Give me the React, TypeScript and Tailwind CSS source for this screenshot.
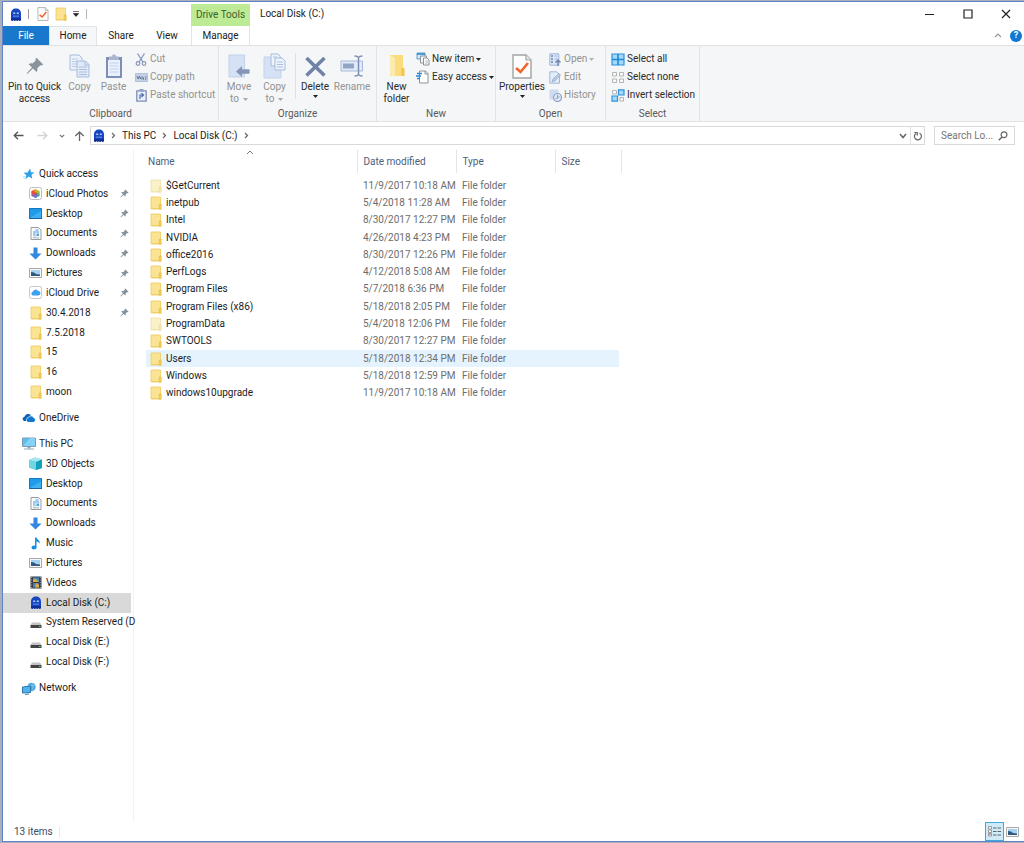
import React from "react";

type Kids = { children: React.ReactNode };

function Ic({ w, h, children }: Kids & { w: number; h: number }) {
  return (
    <svg width={w} height={h} viewBox={`0 0 ${w} ${h}`} fill="none" aria-hidden="true" className="shrink-0">
      {children}
    </svg>
  );
}

const Ghost = () => (
  <Ic w={12} h={13}>
    <path d="M1 12V5.5C1 2.5 3 .5 6 .5s5 2 5 5V12l-1.2 1-1.4-1-1.2 1L6 12l-1.2 1-1.4-1-1.2 1z" fill="#1747c0" />
    <path d="M1 12V10h10v2l-1.2 1-1.4-1-1.2 1L6 12l-1.2 1-1.4-1-1.2 1z" fill="#0d2f96" />
    <path d="M3.2 4.5h2v1.6h-2zM6.8 4.5h2v1.6h-2z" fill="#b9cdfb" />
    <path d="M3 8.5l1 -.7 1 .7 1-.7 1 .7 1-.7 1 .7" stroke="#7f9df0" strokeWidth=".8" />
  </Ic>
);
const Folder = ({ pale = false }: { pale?: boolean }) => (
  <Ic w={12} h={14}>
    <path d="M1 1h9.5v12H1z" fill={pale ? "#fbf1c8" : "#fae392"} stroke={pale ? "#efe0a8" : "#edca5c"} strokeWidth=".8" />
    <path d="M9.2 8h2v5.3h-2z" fill={pale ? "#f6e7ae" : "#f5cf56"} stroke={pale ? "#ead99a" : "#e3b93e"} strokeWidth=".6" />
    <path d="M1.5 12.5h8" stroke={pale ? "#f3e5b0" : "#f0ce61"} />
  </Ic>
);
const Caret = ({ color = "#222" }: { color?: string }) => (
  <Ic w={5} h={3}>
    <path d="M0 0h5L2.5 3z" fill={color} />
  </Ic>
);
const CheckPage = ({ w, h }: { w: number; h: number }) => (
  <svg width={w} height={h} viewBox="0 0 20 25" fill="none" aria-hidden="true">
    <path d="M1 1h13l5 5v18H1z" fill="#fdfdfd" stroke="#a3a3a3" strokeWidth="1.4" />
    <path d="M14 1v5h5" fill="#e8e8e8" stroke="#a3a3a3" strokeWidth="1.2" />
    <path d="M4 14l4.5 4L16 9" stroke="#f2642a" strokeWidth="2.6" />
  </svg>
);
const PinBig = () => (
  <Ic w={18} h={18}>
    <path d="M10.5.8l6.7 6.7-1.5 1.1-1.3-.4-3.1 3.1c.4 1.5.1 2.8-.8 3.8L7 11.6 1.2 17l-.6-.6L6 10.600 2.700 7.300c1-.9 2.400-1.200 3.800-.8l3.200-3.100-.3-1.300z" fill="#8a949c" />
  </Ic>
);
const PinSmall = () => (
  <Ic w={9} h={9}>
    <path d="M5.3.4l3.3 3.3-.8.6-.6-.2-1.5 1.5c.2.8 0 1.5-.4 2L3.5 5.9.8 8.4l-.4-.4 2.6-2.7L1.3 3.6c.5-.5 1.2-.6 1.9-.4L4.8 1.7 4.6 1z" fill="#86929b" />
  </Ic>
);
const pageStroke = "#a9bcda";
const CopyBig = () => (
  <Ic w={21} h={24}>
    <path d="M1 1h9l3 3v12H1z" fill="#eaf1fb" stroke={pageStroke} />
    <path d="M3 5h6M3 7.5h6M3 10h5M3 12.5h5" stroke="#bccbe4" />
    <path d="M8 7h8.500l3.500 3.500V23H8z" fill="#dfe9f8" stroke={pageStroke} />
    <path d="M16 7v4h4" stroke={pageStroke} />
    <path d="M10 13h8M10 15.500h8M10 18h8M10 20.500h8" stroke="#aebfdc" />
  </Ic>
);
const PasteBig = () => (
  <Ic w={18} h={25}>
    <path d="M1 3h16v21H1z" fill="#7d8fb5" />
    <path d="M3 6h12v16H3z" fill="#eaf1fc" />
    <path d="M4 2.500h3C7 1 8 .5 9 .5s2 .5 2 2h3V6H4z" fill="#a8b6d0" />
    <path d="M4.500 9h9M4.500 12h9M4.500 15h9M4.500 18h9" stroke="#cfdcf0" strokeWidth="1.500" />
  </Ic>
);
const Cut = () => (
  <Ic w={12} h={13}>
    <path d="M2.500.5L8 9M9.500.5L4 9" stroke="#8797bb" strokeWidth="1.300" />
    <circle cx="3" cy="10.500" r="1.800" stroke="#8797bb" strokeWidth="1.200" />
    <circle cx="9" cy="10.500" r="1.800" stroke="#8797bb" strokeWidth="1.200" />
  </Ic>
);
const CopyPath = () => (
  <Ic w={13} h={9}>
    <path d="M.5.5h12v8H.5z" fill="#c3d0e6" stroke="#b3c1da" />
    <path d="M2 3l1.200 3L4.500 3l1.200 3M7 3.500v3M8.500 6.500V4.500M10 4h1.500M10 6h1.500" stroke="#5e7299" />
  </Ic>
);
const PasteShortcut = () => (
  <Ic w={11} h={13}>
    <path d="M.8 1.800h9.400v10.400H.8z" fill="#e7effb" stroke="#7d8fb5" strokeWidth="1.300" />
    <path d="M3.500 0h4v2.500h-4z" fill="#8fa0c2" />
    <path d="M4 10V6h3M5.500 4.200L7.500 6 5.500 8" stroke="#4f6ea6" strokeWidth="1.200" />
  </Ic>
);
const MoveTo = () => (
  <Ic w={22} h={24}>
    <path d="M1 1h15.500v22H1z" fill="#d5e1f4" stroke="#c3d3eb" />
    <path d="M8 17.500l6-5.500v3.300h7.500v4.400H14V23z" fill="#8496b8" />
  </Ic>
);
const CopyTo = () => (
  <Ic w={23} h={26}>
    <path d="M1 4h17v21H1z" fill="#d5e1f4" stroke="#c3d3eb" />
    <path d="M8 1h7l2 2v10H8z" fill="#edf3fc" stroke={pageStroke} />
    <path d="M12 5h7l3 3v9H12z" fill="#edf3fc" stroke={pageStroke} />
    <path d="M14 9h6M14 11.500h6M14 14h6M10 4h4" stroke="#aebfdc" />
  </Ic>
);
const Delete = () => (
  <Ic w={21} h={21}>
    <path d="M1.500 2l18 17.500M19.500 2l-18 17.500" stroke="#7082a8" strokeWidth="3.600" />
  </Ic>
);
const Rename = () => (
  <Ic w={24} h={22}>
    <path d="M1 6h21.500v10H1z" fill="#e1eafa" stroke="#a7b9d8" />
    <path d="M3 8.500h11v5H3z" fill="#93a4c4" />
    <path d="M14.500 1c2 0 3.500.5 4 1.500.5-1 2-1.500 4-1.500M18.500 2v18M14.500 21c2 0 3.500-.5 4-1.500.5 1 2 1.500 4 1.500" stroke="#7d8fb3" strokeWidth="1.500" />
  </Ic>
);
const NewFolder = () => (
  <Ic w={16} h={24}>
    <path d="M1 1h13v21H1z" fill="#fbdc7c" />
    <path d="M1 1l5 3v19l-5-2z" fill="#fcebb0" />
    <path d="M12.500 14h3v8h-3z" fill="#f5c548" />
  </Ic>
);
const NewItem = () => (
  <Ic w={14} h={14}>
    <path d="M1 1h8v6H1z" fill="#d7eaf9" stroke="#62a0d0" />
    <path d="M1 2h8" stroke="#3187c9" strokeWidth="1.500" />
    <path d="M4.500 4h6v7h-6z" fill="#f4f6f8" stroke="#8a949c" />
    <path d="M7.500 6h3.500l2 2v5H7.500z" fill="#fff" stroke="#8a949c" />
    <path d="M9 9h3M9 11h3" stroke="#b5bcc2" />
  </Ic>
);
const EasyAccess = () => (
  <Ic w={14} h={14}>
    <path d="M3.500 1h6l2.500 2.500V13H3.500z" fill="#fff" stroke="#8a949c" />
    <path d="M9 1v3h3" stroke="#8a949c" />
    <path d="M1 3.500h5M0 6h5M1 8.500h3" stroke="#2f86d0" strokeWidth="1.300" />
  </Ic>
);
const OpenIc = () => (
  <Ic w={12} h={13}>
    <path d="M.8.8h9v11.400h-9z" fill="#dbe6f6" stroke="#a5b7d6" />
    <path d="M2 3h2M2 6h2M2 9h2" stroke="#6f86b2" strokeWidth="1.600" />
    <path d="M5.500 3h3M5.500 6h3" stroke="#a5b7d6" />
    <path d="M9 13V8M6.500 9.500L9 7l2.500 2.500" stroke="#7388b0" strokeWidth="1.500" />
  </Ic>
);
const EditIc = () => (
  <Ic w={12} h={13}>
    <path d="M.8.8h7l2.700 2.700v8.700H.8z" fill="#e3ecf9" stroke="#a5b7d6" />
    <path d="M3 11l1-3 6-5.500 1.500 1.700L6 9.800z" fill="#bccbe4" stroke="#91a5c8" strokeWidth=".7" />
  </Ic>
);
const HistoryIc = () => (
  <Ic w={13} h={13}>
    <path d="M.5.500h9v10h-9z" fill="#cfdcf0" />
    <circle cx="8.500" cy="8.500" r="4" fill="#dce7f7" stroke="#8ea1c4" strokeWidth="1.200" />
    <path d="M8.500 6v3l-2 1M8.500 9l2-1.500" stroke="#8fa2c6" />
  </Ic>
);
const SelectAll = () => (
  <Ic w={14} h={13}>
    <path d="M1 1h12v11H1z" fill="#a5d9fb" stroke="#2b92dd" strokeWidth="1.200" />
    <path d="M7 1v11M1 6.500h12" stroke="#1f87d6" strokeWidth="1.600" />
  </Ic>
);
const SelectNone = () => (
  <Ic w={14} h={13}>
    <path d="M1.500 1.500h4v3.500h-4zM8.500 1.500h4v3.500h-4zM1.500 8h4v3.500h-4zM8.500 8h4v3.500h-4z" fill="#fbfbfb" stroke="#b4b4b4" />
  </Ic>
);
const Invert = () => (
  <Ic w={14} h={13}>
    <path d="M1.500 1.500h4v3.500h-4zM9 8.500h3.500v3.500H9z" fill="#fbfbfb" stroke="#b4b4b4" />
    <path d="M7.500.800h5.500v5.200H7.500zM1 7h5.500v5.200H1z" fill="#a5d9fb" stroke="#2b92dd" strokeWidth="1.200" />
  </Ic>
);

const Star = () => (
  <Ic w={12} h={12}>
    <path d="M7 .5l1 3.700 3.500.3-3 2.300.8 4-3.500-2.200-3.400 2.700 1-4L.5 4.800l4.100-.4z" fill="#2ea0e6" />
    <path d="M0 8.500h2.500M.5 10.500H2" stroke="#9ccdf0" strokeWidth=".8" />
  </Ic>
);
const Photos = () => (
  <Ic w={13} h={13}>
    <rect x=".5" y=".5" width="12" height="12" rx="2" fill="#fff" stroke="#bdbdbd" />
    <circle cx="6.500" cy="4" r="1.900" fill="#f4a321" />
    <circle cx="8.900" cy="5.200" r="1.900" fill="#9ac43c" />
    <circle cx="8.900" cy="7.800" r="1.900" fill="#4aa986" />
    <circle cx="6.500" cy="9" r="1.900" fill="#5381c6" />
    <circle cx="4.100" cy="7.800" r="1.900" fill="#a75aa4" />
    <circle cx="4.100" cy="5.200" r="1.900" fill="#e5533a" />
    <circle cx="6.500" cy="6.500" r="1.300" fill="#ee3f2e" />
  </Ic>
);
const DesktopIc = () => (
  <Ic w={13} h={11}>
    <path d="M.5.5h12v10H.5z" fill="#1e9be9" stroke="#1576be" />
    <path d="M1 10L12 3v7z" fill="#3eb0f3" />
    <path d="M0 10.500h13" stroke="#15639f" />
  </Ic>
);
const DocIc = () => (
  <Ic w={12} h={13}>
    <path d="M1 .5h7.500L11 3v9.500H1z" fill="#fbfbfb" stroke="#9b9b9b" />
    <path d="M5.500 3h3M3 5h6M3 7h2.500" stroke="#3f9be0" strokeWidth="1.200" />
    <path d="M6.500 6.500H9v2.500H6.500z" fill="#4aa2e3" />
    <path d="M3 8.800h3M3 10.800h6" stroke="#9eb4c6" />
  </Ic>
);
const DownIc = () => (
  <Ic w={13} h={13}>
    <path d="M4.500.500h4v6h4L6.500 12.500.5 6.500h4z" fill="#3288e0" />
  </Ic>
);
const PicIc = () => (
  <Ic w={13} h={10}>
    <path d="M.5.500h12v9H.5z" fill="#f8f8f8" stroke="#a8a8a8" />
    <path d="M2 2h9v6H2z" fill="#a6d2f0" />
    <path d="M2 4l3 .5 2 1.500 4 .5V8H2z" fill="#31597f" />
  </Ic>
);
const CloudIc = () => (
  <Ic w={13} h={13}>
    <rect x=".5" y=".5" width="12" height="12" rx="2" fill="#fff" stroke="#c6c6c6" />
    <path d="M3.700 9.500a2 2 0 010-3.800 3 3 0 015.300-.8 2.300 2.300 0 01.3 4.600z" fill="#3aa2f2" />
  </Ic>
);
const OneDriveIc = () => (
  <Ic w={14} h={10}>
    <path d="M2.300 8a2.200 2.200 0 01.2-4.300A4 4 0 019 2L5.500 4.500C4.300 5.500 4 6.800 4.300 8z" fill="#0a63b5" />
    <path d="M6.300 9a2 2 0 01-.2-3.900 3 3 0 015.300-.3A2.200 2.200 0 0111.700 9z" fill="#0f78d4" />
  </Ic>
);
const PcIc = () => (
  <Ic w={14} h={13}>
    <path d="M.5 1h13v8.500H.5z" fill="#5cbcf0" stroke="#7b9cb4" />
    <path d="M1 9l7-8h5v8z" fill="#86d1f7" />
    <path d="M5.500 10h3v1.500h-3z" fill="#92a5b2" />
    <path d="M2 12h10" stroke="#93a9b8" />
  </Ic>
);
const CubeIc = () => (
  <Ic w={13} h={13}>
    <path d="M0 3l6-2.500L13 2.500v8.500l-6 2L0 10.500z" fill="#35b8cf" />
    <path d="M0 3l6-2.500 7 2L7 5z" fill="#a8e7f0" />
    <path d="M0 3l7 2v8l-7-2.500z" fill="#6fd6e4" />
    <path d="M7 5l6-2.500V11l-6 2z" fill="#149fba" />
  </Ic>
);
const MusicIc = () => (
  <Ic w={12} h={13}>
    <ellipse cx="4" cy="10.500" rx="2.500" ry="2" fill="#1a8fe0" />
    <path d="M5 .5h1.500c.3 2 3.800 2.500 3.300 6.300C9 5.300 8 4.700 6.500 4.500v6H5z" fill="#1a8fe0" />
  </Ic>
);
const VideoIc = () => (
  <Ic w={12} h={13}>
    <path d="M.5.500h11v12H.5z" fill="#303b45" />
    <path d="M3 1.500h6v4.500H3z" fill="#4a86c0" />
    <path d="M3 7h6v4.500H3z" fill="#507db1" />
    <path d="M3 4l2-1.500L9 6H3zM6 7l3 2v2.500H5z" fill="#e1ab41" />
    <path d="M1.700 1v11M10.300 1v11" stroke="#a9b2ba" strokeDasharray="1 1.500" />
  </Ic>
);
const DriveIc = () => (
  <Ic w={12} h={13}>
    <path d="M2 6.500h8l1.500 2.500H.5z" fill="#c4c4c4" />
    <path d="M.5 9h11v3H.5z" fill="#454545" />
    <path d="M9 10h1.500v1H9z" fill="#4be070" />
  </Ic>
);
const NetIc = () => (
  <Ic w={14} h={13}>
    <circle cx="9.500" cy="5" r="4.200" fill="#47a7e2" />
    <path d="M6 3.500h7.500M9.500.8c2 2.500 2 6 0 8.400" stroke="#8fcdf2" strokeWidth=".7" />
    <path d="M.5 5l8-1v6.500l-8 .5z" fill="#4fb2ec" stroke="#2c77b1" />
    <path d="M3 12.500l4-.5" stroke="#54819f" />
  </Ic>
);

function Big({ icon, lines, caret, off, width }: { icon: React.ReactNode; lines: string[]; caret?: boolean; off?: boolean; width: string }) {
  const last = lines.length - 1;
  return (
    <button className={`flex shrink-0 flex-col items-center ${width} ${off ? "text-[#929292]" : "text-[#2b2b2b]"}`}>
      <span className="flex h-[26px] items-center">{icon}</span>
      <span className="mt-[2px] flex flex-col items-center whitespace-nowrap leading-[12px]">
        {lines.map((l, i) => (
          <span key={l} className="flex items-center gap-1">
            {l}
            {caret && i === last && last > 0 && <Caret color={off ? "#a8a8a8" : "#222"} />}
          </span>
        ))}
        {caret && last === 0 && <span className="flex h-[7px] items-center"><Caret /></span>}
      </span>
    </button>
  );
}

function Small({ icon, label, off, caret }: { icon: React.ReactNode; label: string; off?: boolean; caret?: boolean }) {
  return (
    <button className={`flex h-[18px] items-center gap-[2px] whitespace-nowrap ${off ? "text-[#929292]" : "text-[#2b2b2b]"}`}>
      <span className="flex w-[14px] justify-center">{icon}</span>
      <span>{label}</span>
      {caret && <Caret color={off ? "#b0b0b0" : "#222"} />}
    </button>
  );
}

function Group({ title, width, children }: Kids & { title: string; width: string }) {
  return (
    <section aria-label={title} className={`flex shrink-0 flex-col border-r border-[#e2e3e4] ${width}`}>
      <div className="flex h-[61px]">{children}</div>
      <div className="text-center leading-[14px] text-[#5a5a5a]">{title}</div>
    </section>
  );
}
const BigRow = ({ children }: Kids) => <div className="flex pt-[7px]">{children}</div>;
const SmallCol = ({ children }: Kids) => <div className="flex flex-col items-start pt-1">{children}</div>;

type Item = { name: string; icon: React.ReactNode; pin?: boolean; root?: boolean; on?: boolean };
const quick: Item[] = [
  { name: "Quick access", icon: <Star />, root: true },
  { name: "iCloud Photos", icon: <Photos />, pin: true },
  { name: "Desktop", icon: <DesktopIc />, pin: true },
  { name: "Documents", icon: <DocIc />, pin: true },
  { name: "Downloads", icon: <DownIc />, pin: true },
  { name: "Pictures", icon: <PicIc />, pin: true },
  { name: "iCloud Drive", icon: <CloudIc />, pin: true },
  { name: "30.4.2018", icon: <Folder />, pin: true },
  { name: "7.5.2018", icon: <Folder /> },
  { name: "15", icon: <Folder /> },
  { name: "16", icon: <Folder /> },
  { name: "moon", icon: <Folder /> },
];
const pc: Item[] = [
  { name: "This PC", icon: <PcIc />, root: true },
  { name: "3D Objects", icon: <CubeIc /> },
  { name: "Desktop", icon: <DesktopIc /> },
  { name: "Documents", icon: <DocIc /> },
  { name: "Downloads", icon: <DownIc /> },
  { name: "Music", icon: <MusicIc /> },
  { name: "Pictures", icon: <PicIc /> },
  { name: "Videos", icon: <VideoIc /> },
  { name: "Local Disk (C:)", icon: <Ghost />, on: true },
  { name: "System Reserved (D", icon: <DriveIc /> },
  { name: "Local Disk (E:)", icon: <DriveIc /> },
  { name: "Local Disk (F:)", icon: <DriveIc /> },
];

function NavItem({ item }: { item: Item }) {
  return (
    <a href="#" className={`flex items-center whitespace-nowrap ${item.pin ? "pr-[2px]" : ""} ${item.root ? "pl-[18px]" : "pl-[25px]"} ${item.on ? "bg-[#d9d9d9]" : ""}`}>
      <span className="flex w-[15px] shrink-0 justify-center">{item.icon}</span>
      <span className="ml-[3px] flex-1">{item.name}</span>
      {item.pin && <PinSmall />}
    </a>
  );
}

const files: [string, string, boolean?][] = [
  ["$GetCurrent", "11/9/2017 10:18 AM", true],
  ["inetpub", "5/4/2018 11:28 AM"],
  ["Intel", "8/30/2017 12:27 PM"],
  ["NVIDIA", "4/26/2018 4:23 PM"],
  ["office2016", "8/30/2017 12:26 PM"],
  ["PerfLogs", "4/12/2018 5:08 AM"],
  ["Program Files", "5/7/2018 6:36 PM"],
  ["Program Files (x86)", "5/18/2018 2:05 PM"],
  ["ProgramData", "5/4/2018 12:06 PM", true],
  ["SWTOOLS", "8/30/2017 12:27 PM"],
  ["Users", "5/18/2018 12:34 PM"],
  ["Windows", "5/18/2018 12:59 PM"],
  ["windows10upgrade", "11/9/2017 10:18 AM"],
];

const Chevron = () => (
  <Ic w={5} h={7}>
    <path d="M1 1l2.500 2.500L1 6" stroke="#666" strokeWidth="1.200" />
  </Ic>
);

export default function App() {
  return (
    <div className="flex min-h-screen flex-col bg-[#a9b0bb] pb-px pl-[2px] pt-px font-[Roboto,'Noto_Sans',sans-serif] text-[10px] leading-[14px] text-[#1c1c1c]">
      <div className="flex flex-1 flex-col border-b border-l border-t border-[#5f83c4] bg-white">
        <header className="flex h-[43px] items-stretch">
          <div className="flex w-[188px] flex-col">
            <div className="flex h-6 items-center pl-[7px]">
              <Ghost />
              <span className="ml-[6px] h-[10px] w-px bg-[#9b9b9b]" />
              <button aria-label="Properties" className="ml-[8px]"><CheckPage w={12} h={14} /></button>
              <button aria-label="New folder" className="ml-[6px]"><Folder /></button>
              <button aria-label="Customize Quick Access Toolbar" className="ml-[6px]">
                <Ic w={6} h={6}><path d="M0 .5h6M.3 2.500h5.400L3 5.500z" fill="#222" stroke="#222" strokeWidth=".6" /></Ic>
              </button>
              <span className="ml-[7px] h-[10px] w-px bg-[#b5b5b5]" />
            </div>
            <nav className="flex flex-1 items-stretch">
              <button className="w-[46px] bg-[#1a78cc] text-white">File</button>
              <button className="w-[48px] border-x border-t border-[#e2e3e4] bg-[#f6f7f8]">Home</button>
              <button className="w-[48px]">Share</button>
              <button className="w-[44px]">View</button>
            </nav>
          </div>
          <div className="flex w-[59px] flex-col pt-[2px]">
            <div className="flex h-[22px] items-center justify-center bg-[#bdea94] text-[#3e6129]">Drive Tools</div>
            <button className="flex-1 border-x border-[#e2e3e4]">Manage</button>
          </div>
          <h1 className="ml-[10px] mt-[5px] text-[10px]">Local Disk (C:)</h1>
          <div className="ml-auto flex flex-col items-end">
            <div className="flex h-6 items-center gap-[28px] pr-[13px]">
              <button aria-label="Minimize"><Ic w={10} h={10}><path d="M0 5.500h9" stroke="#222" /></Ic></button>
              <button aria-label="Maximize"><Ic w={10} h={10}><path d="M1 1h8v8H1z" stroke="#222" strokeWidth="1.200" /></Ic></button>
              <button aria-label="Close"><Ic w={10} h={10}><path d="M1 1l8 8M9 1L1 9" stroke="#222" strokeWidth="1.200" /></Ic></button>
            </div>
            <div className="flex flex-1 items-center gap-[8px] pr-[2px]">
              <button aria-label="Collapse the ribbon"><Ic w={8} h={5}><path d="M1 4l3-3 3 3" stroke="#999" strokeWidth="1.200" /></Ic></button>
              <button aria-label="Help" className="flex h-[12px] w-[12px] items-center justify-center rounded-full bg-[#0f78d4] text-[9px] font-bold leading-none text-white">?</button>
            </div>
          </div>
        </header>

        <div className="flex h-[77px] items-stretch border-y border-[#dfe1e3] bg-[#f5f6f7]">
          <Group title="Clipboard" width="w-[216px]">
            <BigRow>
              <Big width="w-[63px]" icon={<PinBig />} lines={["Pin to Quick", "access"]} />
              <Big width="w-[27px]" off icon={<CopyBig />} lines={["Copy"]} />
              <Big width="w-[41px]" off icon={<PasteBig />} lines={["Paste"]} />
            </BigRow>
            <SmallCol>
              <Small off icon={<Cut />} label="Cut" />
              <Small off icon={<CopyPath />} label="Copy path" />
              <Small off icon={<PasteShortcut />} label="Paste shortcut" />
            </SmallCol>
          </Group>
          <Group title="Organize" width="w-[158px]">
            <BigRow>
              <Big width="w-[40px]" off caret icon={<MoveTo />} lines={["Move", "to"]} />
              <Big width="w-[31px]" off caret icon={<CopyTo />} lines={["Copy", "to"]} />
              <span className="ml-[5px] h-[46px] w-px bg-[#e0e1e2]" />
              <Big width="w-[38px]" caret icon={<Delete />} lines={["Delete"]} />
              <Big width="w-[36px]" off icon={<Rename />} lines={["Rename"]} />
            </BigRow>
          </Group>
          <Group title="New" width="w-[119px]">
            <BigRow>
              <Big width="w-[39px]" icon={<NewFolder />} lines={["New", "folder"]} />
            </BigRow>
            <SmallCol>
              <Small caret icon={<NewItem />} label="New item" />
              <Small caret icon={<EasyAccess />} label="Easy access" />
            </SmallCol>
          </Group>
          <Group title="Open" width="w-[110px]">
            <BigRow>
              <Big width="w-[52px]" caret icon={<CheckPage w={20} h={25} />} lines={["Properties"]} />
            </BigRow>
            <SmallCol>
              <Small off caret icon={<OpenIc />} label="Open" />
              <Small off icon={<EditIc />} label="Edit" />
              <Small off icon={<HistoryIc />} label="History" />
            </SmallCol>
          </Group>
          <Group title="Select" width="w-[94px]">
            <div className="pl-[5px]">
              <SmallCol>
                <Small icon={<SelectAll />} label="Select all" />
                <Small icon={<SelectNone />} label="Select none" />
                <Small icon={<Invert />} label="Invert selection" />
              </SmallCol>
            </div>
          </Group>
        </div>

        <div className="flex h-[27px] items-center pr-[9px]">
          <div className="flex w-[87px] items-center pl-[10px]">
            <button aria-label="Back"><Ic w={11} h={9}><path d="M10.500 4.500H1M5 .8L1.200 4.500 5 8.200" stroke="#555" strokeWidth="1.300" /></Ic></button>
            <button aria-label="Forward" className="ml-[13px]"><Ic w={11} h={9}><path d="M.5 4.500H10M6 .8l3.800 3.700L6 8.200" stroke="#d2d2d2" strokeWidth="1.300" /></Ic></button>
            <button aria-label="Recent locations" className="ml-[11px]"><Ic w={6} h={4}><path d="M.8.8L3 3 5.200.8" stroke="#777" strokeWidth="1.200" /></Ic></button>
            <button aria-label="Up" className="ml-[9px]"><Ic w={11} h={10}><path d="M5.500 10V1M1.300 5l4.200-4 4.200 4" stroke="#666" strokeWidth="1.300" /></Ic></button>
          </div>
          <div className="flex h-[19px] flex-1 items-center gap-[6px] border border-[#d9d9d9] pl-[2px]">
            <Ghost />
            <Chevron />
            <a href="#">This PC</a>
            <Chevron />
            <a href="#">Local Disk (C:)</a>
            <Chevron />
            <div className="ml-auto flex h-full items-center gap-[3px]">
              <button aria-label="Previous locations"><Ic w={8} h={6}><path d="M1 1l3 3.500L7 1" stroke="#666" strokeWidth="1.500" /></Ic></button>
              <button aria-label="Refresh" className="flex h-full w-[14px] items-center justify-center border-l border-[#e2e2e2]">
                <Ic w={10} h={10}><path d="M6.500 2.200A3.500 3.500 0 113 2.400M1.300 1.500H4.300V4.500" stroke="#666" strokeWidth="1.200" /></Ic>
              </button>
            </div>
          </div>
          <label className="ml-[9px] flex h-[19px] w-[81px] items-center border border-[#d9d9d9] pl-[6px] pr-[6px]">
            <input aria-label="Search Local Disk (C:)" placeholder="Search Lo..." className="min-w-0 flex-1 bg-transparent outline-none placeholder:text-[#757575]" />
            <Ic w={10} h={10}><circle cx="6" cy="3.800" r="2.900" stroke="#666" strokeWidth="1.200" /><path d="M4 6L.8 9.200" stroke="#666" strokeWidth="1.500" /></Ic>
          </label>
        </div>

        <div className="flex flex-1 pt-px">
          <nav aria-label="Folders" className="w-[131px] shrink-0 border-r border-[#f2f2f2] pr-[2px] pt-[14px]">
            <div className="grid h-[238px] auto-rows-fr">{quick.map((i) => <NavItem key={i.name} item={i} />)}</div>
            <div className="mt-[6px] grid h-5"><NavItem item={{ name: "OneDrive", icon: <OneDriveIc />, root: true }} /></div>
            <div className="mt-[6px] grid h-[238px] auto-rows-fr grid-cols-[minmax(0,1fr)]">{pc.map((i) => <NavItem key={i.name} item={i} />)}</div>
            <div className="mt-[6px] grid h-5"><NavItem item={{ name: "Network", icon: <NetIc />, root: true }} /></div>
          </nav>
          <main className="flex-1 pl-[12px]">
            <table className="table-fixed border-collapse text-left">
              <colgroup>
                <col className="w-[211px]" />
                <col className="w-[99px]" />
                <col className="w-[99px]" />
                <col className="w-[66px]" />
              </colgroup>
              <thead className="text-[#4c607a]">
                <tr className="h-[23px]">
                  <th className="relative border-r border-[#e5e5e5] p-0 pl-[2px] font-normal">
                    Name
                    <span className="absolute left-[100px] top-0"><Ic w={8} h={5}><path d="M1 4l3-3 3 3" stroke="#777" /></Ic></span>
                  </th>
                  <th className="border-r border-[#e5e5e5] p-0 pl-[6px] font-normal">Date modified</th>
                  <th className="border-r border-[#e5e5e5] p-0 pl-[6px] font-normal">Type</th>
                  <th className="border-r border-[#e5e5e5] p-0 pl-[6px] font-normal">Size</th>
                </tr>
              </thead>
            </table>
            <table className="mt-1 h-[225px] w-[473px] table-fixed border-collapse text-left" aria-label="Files">
              <colgroup>
                <col className="w-[212px]" />
                <col className="w-[99px]" />
                <col />
              </colgroup>
              <tbody>
                {files.map(([name, date, pale]) => (
                  <tr key={name} className={name === "Users" ? "bg-[#e5f3ff]" : "hover:bg-[#e5f3ff]"}>
                    <td className="p-0 pl-[4px]">
                      <span className="flex items-center gap-[4px]"><Folder pale={pale} />{name}</span>
                    </td>
                    <td className="whitespace-nowrap p-0 pl-[5px] text-[#6d6d6d]">{date}</td>
                    <td className="p-0 pl-[5px] text-[#6d6d6d]">File folder</td>
                  </tr>
                ))}
              </tbody>
            </table>
          </main>
        </div>

        <footer className="flex h-[19px] items-center pl-[11px] pr-[5px] text-[#3a4a63]">
          <span>13 items</span>
          <span className="ml-[6px] h-[10px] w-px bg-[#e8e8e8]" />
          <button aria-label="Details view" className="ml-auto flex h-[19px] w-[19px] items-center justify-center border border-[#3fa9dc] bg-[#cdebf9]">
            <Ic w={13} h={11}>
              <path d="M.5.500h3v2.500h-3zM.5 4h3v2.500h-3zM.5 7.500h3v2.500h-3z" fill="#fff" stroke="#888" strokeWidth=".8" />
              <path d="M5 2h3.500M9.500 2H13M5 5.500h3.500M9.500 5.500H13M5 9h3.500M9.500 9H13" stroke="#666" />
              <path d="M1.500 8.500h1" stroke="#d33" />
            </Ic>
          </button>
          <button aria-label="Large icons view" className="ml-[2px]"><PicIc /></button>
        </footer>
      </div>
    </div>
  );
}
